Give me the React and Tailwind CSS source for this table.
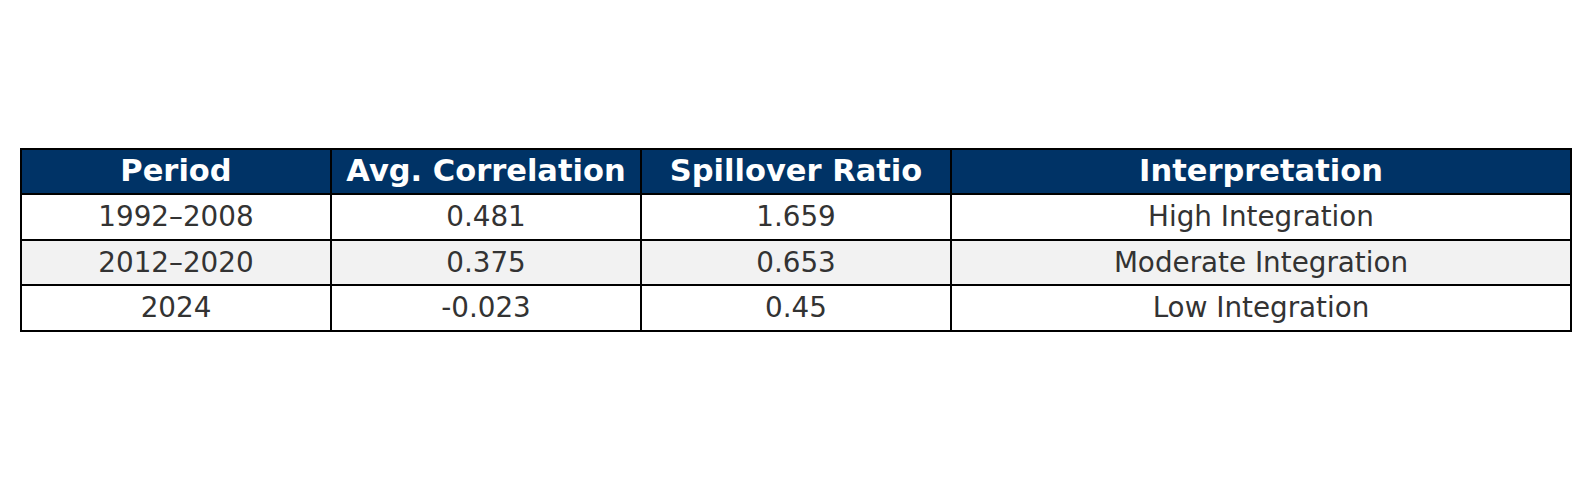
import React from 'react';

const rows = [
  ['1992–2008', '0.481', '1.659', 'High Integration'],
  ['2012–2020', '0.375', '0.653', 'Moderate Integration'],
  ['2024', '-0.023', '0.45', 'Low Integration'],
];

const headers = ['Period', 'Avg. Correlation', 'Spillover Ratio', 'Interpretation'];

export default function App() {
  return (
    <div
      className="w-[1590px] h-[480px] bg-white pt-[148px] pl-[20px]"
      style={{ fontFamily: '"DejaVu Sans", "Liberation Sans", sans-serif' }}
    >
      <table className="border-collapse w-[1550px] table-fixed">
        <colgroup>
          <col className="w-[310px]" />
          <col className="w-[310px]" />
          <col className="w-[310px]" />
          <col className="w-[620px]" />
        </colgroup>
        <thead>
          <tr className="h-[45px] bg-[#003366]">
            {headers.map((h) => (
              <th
                key={h}
                className="border-2 border-black text-white text-[30.5px] font-bold text-center p-0 pb-[1px] leading-none"
              >
                {h}
              </th>
            ))}
          </tr>
        </thead>
        <tbody>
          {rows.map((r, i) => (
            <tr key={i} className={i === 1 ? 'h-[45.5px] bg-[#f2f2f2]' : 'h-[45.5px] bg-white'}>
              {r.map((c, j) => (
                <td
                  key={j}
                  className="border-2 border-black text-[#333333] text-[27.8px] text-center p-0 pt-[1px] leading-none"
                >
                  {c}
                </td>
              ))}
            </tr>
          ))}
        </tbody>
      </table>
    </div>
  );
}
